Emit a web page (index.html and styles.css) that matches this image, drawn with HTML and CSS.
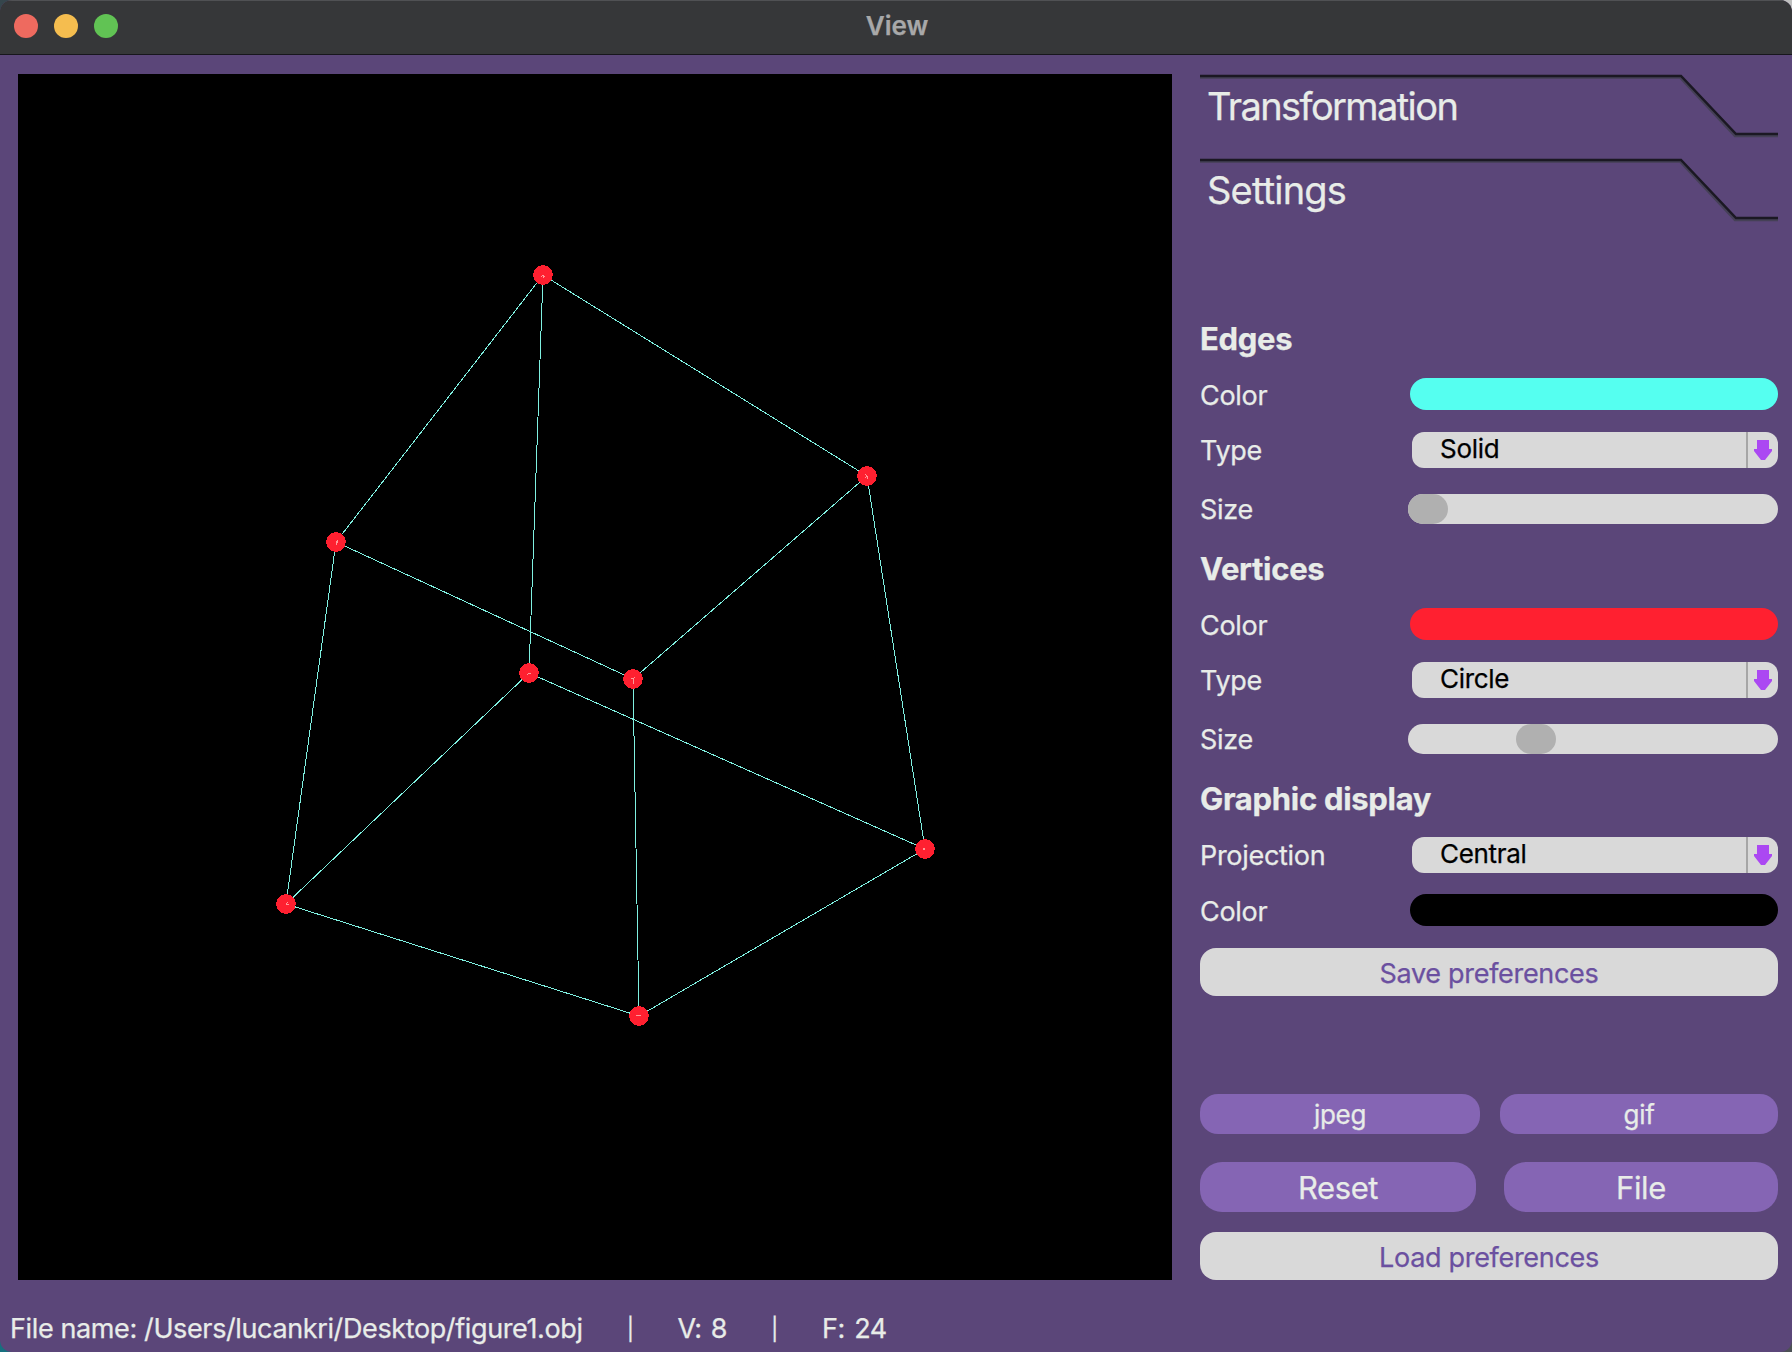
FILE: index.html
```html
<!DOCTYPE html>
<html lang="en">

<head>
  <meta charset="UTF-8">
  <title>View</title>
  <link rel="stylesheet" href="styles.css">
</head>

<body>
  <div class="window">
    <div class="titlebar">
      <div class="lights">
        <span class="light light-red"></span>
        <span class="light light-yellow"></span>
        <span class="light light-green"></span>
      </div>
      <div class="title">View</div>
    </div>

    <div class="main">
      <svg class="canvas" viewBox="0 0 1154 1206" width="1154" height="1206">
        <g class="edges" transform="translate(-18 -74)">
          <line x1="543" y1="275" x2="867" y2="476" />
          <line x1="543" y1="275" x2="336" y2="542" />
          <line x1="543" y1="275" x2="529" y2="673" />
          <line x1="867" y1="476" x2="633" y2="679" />
          <line x1="867" y1="476" x2="925" y2="849" />
          <line x1="336" y1="542" x2="633" y2="679" />
          <line x1="336" y1="542" x2="286" y2="904" />
          <line x1="529" y1="673" x2="925" y2="849" />
          <line x1="529" y1="673" x2="286" y2="904" />
          <line x1="633" y1="679" x2="639" y2="1016" />
          <line x1="925" y1="849" x2="639" y2="1016" />
          <line x1="286" y1="904" x2="639" y2="1016" />
        </g>
        <g class="vertices" transform="translate(-18 -74)">
          <circle cx="543" cy="275" r="9.8" />
          <circle cx="867" cy="476" r="9.8" />
          <circle cx="336" cy="542" r="9.8" />
          <circle cx="529" cy="673" r="9.8" />
          <circle cx="633" cy="679" r="9.8" />
          <circle cx="925" cy="849" r="9.8" />
          <circle cx="286" cy="904" r="9.8" />
          <circle cx="639" cy="1016" r="9.8" />
        </g>
        <!-- edge ends show through the middle of each point -->
        <g class="ticks" transform="translate(-18 -74)">
          <path d="M541 277L543 275L545 277M543 275V278" />
          <path d="M865 478L867 476L865 474M867 476V479" />
          <path d="M338 541L336 542L336 545L338 540" />
          <path d="M527 675L529 673L531 674" />
          <path d="M631 678L633 679L635 677M633 679V684" />
          <path d="M923 848L925 849L923 850" />
          <path d="M288 902L286 904L289 905" />
          <path d="M636 1015L639 1016L641 1015" />
        </g>
      </svg>

      <div class="panel">
        <div class="tab">
          <svg class="tab-line" viewBox="0 0 578 84" width="578" height="84">
            <polyline class="tab-shadow" points="0,3.5 480,3.5 535,62 578,62" />
            <polyline class="tab-stroke" points="0,2 481,2 536,60 578,60" />
          </svg>
          <span class="tab-title tab-title-long">Transformation</span>
        </div>
        <div class="tab">
          <svg class="tab-line" viewBox="0 0 578 84" width="578" height="84">
            <polyline class="tab-shadow" points="0,3.5 480,3.5 535,62 578,62" />
            <polyline class="tab-stroke" points="0,2 481,2 536,60 578,60" />
          </svg>
          <span class="tab-title">Settings</span>
        </div>

        <h3 class="heading heading-first">Edges</h3>
        <div class="row row-color">
          <label>Color</label>
          <div class="swatch swatch-cyan"></div>
        </div>
        <div class="row row-combo">
          <label>Type</label>
          <div class="combo">
            <span class="combo-text">Solid</span>
            <span class="combo-arrow">
              <svg viewBox="0 0 18 22" width="18" height="22">
                <path d="M3 1h12v9h3v2l-7 9h-4l-7-9v-2h3z" />
              </svg>
            </span>
          </div>
        </div>
        <div class="row row-size">
          <label>Size</label>
          <div class="slider"><span class="thumb"></span></div>
        </div>

        <h3 class="heading">Vertices</h3>
        <div class="row row-color">
          <label>Color</label>
          <div class="swatch swatch-red"></div>
        </div>
        <div class="row row-combo">
          <label>Type</label>
          <div class="combo">
            <span class="combo-text">Circle</span>
            <span class="combo-arrow">
              <svg viewBox="0 0 18 22" width="18" height="22">
                <path d="M3 1h12v9h3v2l-7 9h-4l-7-9v-2h3z" />
              </svg>
            </span>
          </div>
        </div>
        <div class="row row-size">
          <label>Size</label>
          <div class="slider slider-mid"><span class="thumb"></span></div>
        </div>

        <h3 class="heading">Graphic display</h3>
        <div class="row row-combo row-projection">
          <label>Projection</label>
          <div class="combo">
            <span class="combo-text">Central</span>
            <span class="combo-arrow">
              <svg viewBox="0 0 18 22" width="18" height="22">
                <path d="M3 1h12v9h3v2l-7 9h-4l-7-9v-2h3z" />
              </svg>
            </span>
          </div>
        </div>
        <div class="row row-color row-bg">
          <label>Color</label>
          <div class="swatch swatch-black"></div>
        </div>

        <button class="btn btn-light btn-save">Save preferences</button>

        <div class="btn-row btn-row-small">
          <button class="btn btn-purple btn-small btn-jpeg">jpeg</button>
          <button class="btn btn-purple btn-small btn-gif">gif</button>
        </div>
        <div class="btn-row btn-row-big">
          <button class="btn btn-purple btn-big btn-reset">Reset</button>
          <button class="btn btn-purple btn-big btn-file">File</button>
        </div>

        <button class="btn btn-light btn-load">Load preferences</button>
      </div>
    </div>

    <div class="status">
      <span>File name: /Users/lucankri/Desktop/figure1.obj</span>
      <span class="status-sep">|</span>
      <span class="status-count">V: 8</span>
      <span class="status-sep">|</span>
      <span class="status-count">F: 24</span>
    </div>
  </div>
</body>

</html>
```

FILE: styles.css
```css
* {
  box-sizing: border-box;
}

body {
  margin: 0;
  background: linear-gradient(45deg, #17707f, #3a3f44 50%, #c0c0c0);
  font-family: Inter, "Liberation Sans", sans-serif;
}

.window {
  width: 1792px;
  height: 1352px;
  background: #5b4679;
  border-radius: 12px;
  overflow: hidden;
  display: flex;
  flex-direction: column;
  -webkit-text-stroke: 0.25px;
}

.titlebar {
  height: 55px;
  flex: none;
  padding-bottom: 4px;
  background: #363739;
  border-bottom: 1px solid #17161c;
  box-shadow: inset 0 1px 0 #505154;
  display: flex;
  align-items: center;
  justify-content: center;
  position: relative;
}

.lights {
  position: absolute;
  left: 14px;
  top: 14px;
  display: flex;
  gap: 16px;
}

.light {
  width: 24px;
  height: 24px;
  border-radius: 50%;
}

.light-red {
  background: #ee6a5f;
}

.light-yellow {
  background: #f5bd4f;
}

.light-green {
  background: #61c354;
}

.title {
  margin-left: 2px;
  font-size: 26px;
  font-weight: 600;
  color: #a8a8a9;
}

.main {
  display: flex;
  gap: 28px;
  padding: 19px 14px 0 18px;
}

.canvas {
  display: block;
  flex: none;
  background: #000;
  shape-rendering: crispEdges;
}

.edges line {
  stroke: #7ff0e0;
  stroke-width: 1;
}

.vertices circle {
  fill: #ff2030;
}

.ticks path {
  fill: none;
  stroke: #ff9a9a;
  stroke-width: 1;
}

.panel {
  width: 578px;
  display: flex;
  flex-direction: column;
}

.tab {
  height: 84px;
  position: relative;
  padding: 9px 0 0 7px;
}

.tab-line {
  position: absolute;
  left: 0;
  top: 0;
}

.tab-line polyline {
  fill: none;
}

.tab-stroke {
  stroke: #1b1823;
  stroke-width: 2.5;
}

.tab-shadow {
  stroke: #454056;
  stroke-width: 2.5;
}

.tab-title {
  position: relative;
  font-size: 38px;
  line-height: 46px;
  color: #e8ece8;
  letter-spacing: -0.8px;
}

/* Inter runs wider than the reference on this word */
.tab-title-long {
  letter-spacing: -1.6px;
}

.heading {
  margin: 27px 0 0;
  height: 36px;
  line-height: 36px;
  font-size: 31px;
  font-weight: 700;
  color: #e8ece8;
  letter-spacing: -0.3px;
}

.heading-first {
  margin-top: 79px;
}

.row {
  display: flex;
  align-items: center;
}

.row label {
  width: 210px;
  flex: none;
  padding-top: 1px;
  font-size: 27px;
  color: #e8ece8;
  letter-spacing: -0.3px;
}

.row-color {
  height: 32px;
  margin-top: 21px;
}

.row-color label {
  padding-top: 3px;
}

.row-combo {
  height: 36px;
  margin-top: 22px;
}

.row-size {
  height: 30px;
  margin-top: 26px;
}

.row-projection {
  margin-top: 20px;
}

.row-bg {
  margin-top: 21px;
}

.swatch {
  flex: 1;
  height: 100%;
  border-radius: 16px;
}

.swatch-cyan {
  background: #55fff0;
}

.swatch-red {
  background: #ff2030;
}

.swatch-black {
  background: #000;
}

.combo {
  flex: 1;
  height: 100%;
  margin-left: 2px;
  background: #d9d9d9;
  border-radius: 12px;
  display: flex;
  align-items: center;
}

.combo-text {
  flex: 1;
  padding: 0 0 4px 28px;
  font-size: 26px;
  color: #000;
  letter-spacing: -0.3px;
}

.combo-arrow {
  width: 32px;
  height: 100%;
  border-left: 2px solid #a6a6a6;
  display: flex;
  align-items: center;
  justify-content: center;
}

.combo-arrow svg {
  display: block;
  filter: blur(0.6px);
}

.combo-arrow path {
  fill: #ab48f2;
}

.slider {
  flex: 1;
  height: 100%;
  margin-left: -2px;
  background: #d9d9d9;
  border-radius: 15px;
  display: flex;
}

.slider-mid {
  padding-left: 108px;
}

.thumb {
  width: 40px;
  height: 100%;
  background: #b0b0b0;
  border-radius: 15px;
}

.btn {
  border: 0;
  padding: 0;
  font-family: inherit;
  display: block;
}

.btn-light {
  width: 100%;
  height: 48px;
  flex: none;
  padding-top: 2px;
  background: #d9d9d9;
  color: #6b50a0;
  border-radius: 16px;
  font-size: 27px;
  letter-spacing: -0.3px;
}

.btn-save {
  margin-top: 22px;
}

.btn-load {
  margin-top: 20px;
}

.btn-row {
  display: flex;
  justify-content: space-between;
}

.btn-row-small {
  margin-top: 98px;
}

.btn-row-big {
  margin-top: 28px;
}

.btn-purple {
  background: #8565b4;
  color: #e8ece8;
}

.btn-small {
  height: 40px;
  border-radius: 18px;
  font-size: 26px;
  letter-spacing: -0.3px;
}

.btn-big {
  height: 50px;
  border-radius: 22px;
  font-size: 31px;
  letter-spacing: -0.4px;
}

.btn-jpeg {
  width: 280px;
}

.btn-gif {
  width: 278px;
}

.btn-reset {
  width: 276px;
}

.btn-file {
  width: 274px;
}

.status {
  margin-top: 31px;
  padding-left: 10px;
  display: flex;
  align-items: center;
  font-size: 27px;
  line-height: 36px;
  color: #e8ece8;
  letter-spacing: -0.38px;
}

.status-count {
  word-spacing: 2px;
}

.status-sep {
  margin: 0 44px;
  font-size: 22px;
}
```
